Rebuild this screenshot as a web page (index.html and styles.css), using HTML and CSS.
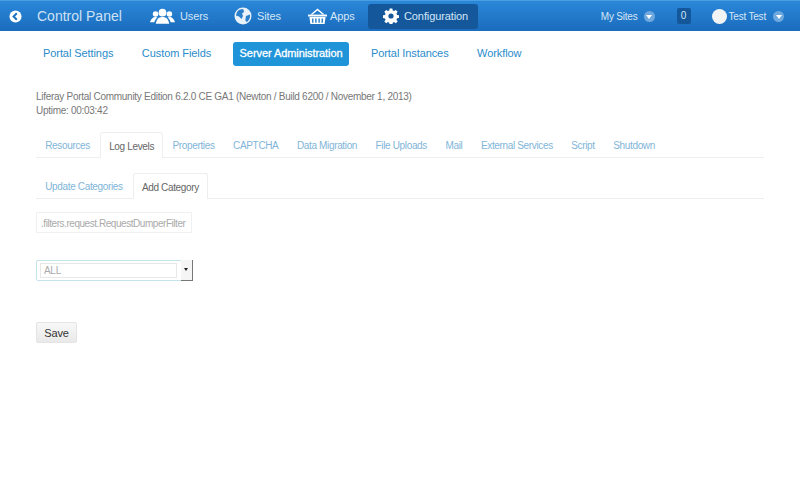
FILE: index.html
```html
<!DOCTYPE html>
<html lang="en">
<head>
  <meta charset="UTF-8" />
  <title>Control Panel</title>
  <link rel="stylesheet" href="styles.css">
</head>
<body>
  <header class="dockbar">
    <div class="back">
      <svg viewBox="0 0 14 14" width="13" height="13"><circle cx="7" cy="7" r="6.5" fill="#fff"/><path d="M8.4 3.6 5 7l3.4 3.4" fill="none" stroke="#1b74c5" stroke-width="2.2"/></svg>
    </div>
    <div class="brand">Control Panel</div>
    <nav class="main-nav">
      <a class="nav-item users">
        <svg viewBox="0 0 26 16" width="25" height="16"><g fill="#fff"><circle cx="13" cy="4.5" r="4"/><path d="M6 16c1-5 3-7 7-7s6 2 7 7z"/><circle cx="5.800" cy="6" r="2.900"/><path d="M0 14.500c1-3.500 3-5.500 5.500-5.500 1 0 1.700.2 2.300.6C6 11 5 13 4.500 14.500z"/><circle cx="20.200" cy="6" r="2.900"/><path d="M26 14.500c-1-3.500-3-5.500-5.500-5.500-1 0-1.700.2-2.300.6 1.800 1.400 2.800 3.400 3.300 4.900z"/></g></svg>
        Users
      </a>
      <a class="nav-item sites">
        <svg viewBox="0 0 18 18" width="18" height="18"><circle cx="9" cy="9" r="8.500" fill="#e9f2fa"/><path d="M4 3.800C6 2.300 8 2 9.500 2.500l.5 2.500-2 1.500L9 9l-1.500 3L5 9.500 2 8.500C2.200 7 3 5 4 3.800zM12 9l4-1.500c.5 2.500-.5 5.500-3 7.500-1.500-.5-1.800-2-1.500-3z" fill="#2b7fcb"/></svg>
        Sites
      </a>
      <a class="nav-item apps">
        <svg viewBox="0 0 20 18" width="19" height="18"><g fill="#fff"><path d="M10 1.200 2.500 7.500h2.200L10 3.200l5.300 4.300h2.200z"/><rect x="0" y="7.500" width="20" height="2"/><path d="M1.500 10h17l-1 7.500h-15z"/></g><path d="M5 11.500v4.500M8.300 11.500v4.500M11.700 11.500v4.500M15 11.500v4.500" stroke="#2b7fcb" stroke-width="1.500"/></svg>
        Apps
      </a>
      <a class="nav-item config">
        <svg viewBox="0 0 16 16" width="16" height="16"><path d="M6.500 0h3l.4 2.200 1.500.6L13.300 1.500l2.100 2.100-1.300 1.900.6 1.500 2.200.4v3l-2.200.4-.6 1.500 1.300 1.900-2.100 2.100-1.900-1.300-1.500.6-.4 2.200h-3l-.4-2.200-1.500-.6-1.900 1.300L.6 14.300l1.300-1.900-.6-1.500L-.9 10.500v-3l2.200-.4.6-1.500L.6 3.600l2.100-2.100 1.900 1.300 1.500-.6z" transform="translate(.8 .6) scale(.9)" fill="#fff"/><circle cx="8" cy="8" r="2.600" fill="#14589b"/></svg>
        Configuration
      </a>
    </nav>
    <div class="user-area">
      <span class="user-link my-sites">My Sites <i class="caret"></i></span>
      <span class="badge">0</span>
      <span class="user-link account"><i class="avatar"></i>Test Test <i class="caret"></i></span>
    </div>
  </header>

  <nav class="section-nav">
    <a>Portal Settings</a>
    <a>Custom Fields</a>
    <a class="active">Server Administration</a>
    <a>Portal Instances</a>
    <a>Workflow</a>
  </nav>

  <main class="content">
    <p class="version">Liferay Portal Community Edition 6.2.0 CE GA1 (Newton / Build 6200 / November 1, 2013)<br>Uptime: 00:03:42</p>

    <ul class="tabs primary">
      <li>Resources</li>
      <li class="active">Log Levels</li>
      <li>Properties</li>
      <li>CAPTCHA</li>
      <li>Data Migration</li>
      <li>File Uploads</li>
      <li>Mail</li>
      <li>External Services</li>
      <li>Script</li>
      <li>Shutdown</li>
    </ul>

    <ul class="tabs secondary">
      <li>Update Categories</li>
      <li class="active">Add Category</li>
    </ul>

    <input class="field" type="text" value=".filters.request.RequestDumperFilter">

    <div class="select-box">
      <input class="select-input" type="text" value="ALL">
      <span class="select-btn"><i></i></span>
    </div>

    <button class="save">Save</button>
  </main>
</body>
</html>
```

FILE: styles.css
```css
* {
  box-sizing: border-box;
}

body {
  margin: 0;
  font-family: "Liberation Sans", Arial, sans-serif;
  background: #fff;
  color: #555;
  height: 504px;
  overflow: hidden;
}

.dockbar {
  height: 31px;
  display: flex;
  align-items: center;
  color: #fff;
  background: linear-gradient(#2a87d8, #1b6cbd);
  border-top: 1px solid #4a9fe4;
}

.back {
  width: 37px;
  padding-left: 9px;
  display: flex;
}

.brand {
  width: 113px;
  font-size: 14px;
  color: #cfe2f4;
}

.main-nav {
  display: flex;
  align-items: center;
  height: 25px;
}

.nav-item {
  display: flex;
  align-items: center;
  height: 25px;
  font-size: 11px;
  letter-spacing: -0.1px;
  color: #d5e6f6;
}

.users {
  width: 84px;
  gap: 5px;
}

.sites {
  width: 74px;
  gap: 5px;
}

.apps {
  width: 60px;
  gap: 3px;
}

.config {
  width: 110px;
  gap: 5px;
  padding-left: 15px;
  background: #14589b;
  border-radius: 3px;
}

.user-area {
  margin-left: auto;
  display: flex;
  align-items: center;
  font-size: 10px;
  letter-spacing: -0.2px;
  color: #d5e6f6;
  padding-right: 16px;
}

.user-link {
  display: flex;
  align-items: center;
  gap: 6px;
}

.account {
  gap: 7px;
}

.caret {
  width: 11px;
  height: 11px;
  border-radius: 50%;
  background: #6ea8de;
  position: relative;
}

.caret::after {
  content: "";
  position: absolute;
  left: 2.500px;
  top: 4px;
  border-left: 3px solid transparent;
  border-right: 3px solid transparent;
  border-top: 4px solid #fff;
}

.badge {
  width: 14px;
  height: 16px;
  margin: 0 21px 0 22px;
  text-align: center;
  line-height: 16px;
  background: #14589b;
  border-radius: 2px;
}

.avatar {
  width: 15px;
  height: 15px;
  border-radius: 50%;
  background: #f1f3f5;
  margin-right: -5px;
}

.section-nav {
  display: flex;
  align-items: center;
  height: 24px;
  margin: 11px 0 0 36px;
  font-size: 11px;
  letter-spacing: -0.08px;
  color: #2a8ccb;
}

.section-nav a {
  padding: 0 7px;
  margin-right: 14.500px;
  line-height: 23px;
  height: 24px;
}

.section-nav .active {
  background: #1f94d9;
  color: #fff;
  border-radius: 3px;
  -webkit-text-stroke: 0.3px #fff;
}

.content {
  padding: 0 36px;
}

.version {
  margin: 24px 0 0;
  font-size: 10px;
  letter-spacing: -0.28px;
  line-height: 14px;
  color: #777;
}

.tabs {
  display: flex;
  list-style: none;
  margin: 0;
  padding: 0;
  height: 26px;
  font-size: 10px;
  letter-spacing: -0.35px;
  line-height: 27px;
  color: #7fb5d8;
  border-bottom: 1px solid #eee;
}

.tabs li {
  height: 26px;
  padding: 0 9.25px;
  white-space: nowrap;
}

.tabs li:first-child {
  padding-right: 10px;
}

.tabs .active {
  padding: 0 8.25px;
  color: #666;
  background: #fff;
  border: 1px solid #eee;
  border-bottom: none;
  border-radius: 3px 3px 0 0;
}

.primary {
  margin-top: 14px;
}

.secondary {
  margin-top: 15px;
}

.field {
  display: block;
  width: 156px;
  height: 21px;
  margin-top: 13px;
  padding: 1px 3px 0 4px;
  font: 10px "Liberation Sans", Arial, sans-serif;
  letter-spacing: -0.45px;
  color: #aaa;
  border: 1px solid #f0f0f0;
  outline: none;
}

.select-box {
  width: 157px;
  height: 21px;
  margin-top: 27px;
  display: flex;
  justify-content: space-between;
  padding: 2px 0 2px 3px;
  border: 1px solid #c5e3ea;
  border-radius: 2px;
}

.select-input {
  width: 137px;
  height: 15px;
  padding: 0 3px;
  font: 10px "Liberation Sans", Arial, sans-serif;
  letter-spacing: -0.3px;
  color: #aaa;
  border: 1px solid #e8e8e8;
  outline: none;
}

.select-btn {
  width: 12px;
  margin: -3px -1px -3px 0;
  position: relative;
  background: #f5f5f5;
  border-right: 1px solid #777;
  border-bottom: 1px solid #777;
}

.select-btn i {
  position: absolute;
  left: 3px;
  top: 8px;
  border-left: 2px solid transparent;
  border-right: 2px solid transparent;
  border-top: 3px solid #222;
}

.save {
  display: block;
  width: 41px;
  height: 21px;
  margin-top: 41px;
  padding: 0;
  font: 11px "Liberation Sans", Arial, sans-serif;
  letter-spacing: -0.1px;
  color: #333;
  background: linear-gradient(#f8f8f8, #e9e9e9);
  border: 1px solid #e4e4e4;
  border-radius: 2px;
}
```
